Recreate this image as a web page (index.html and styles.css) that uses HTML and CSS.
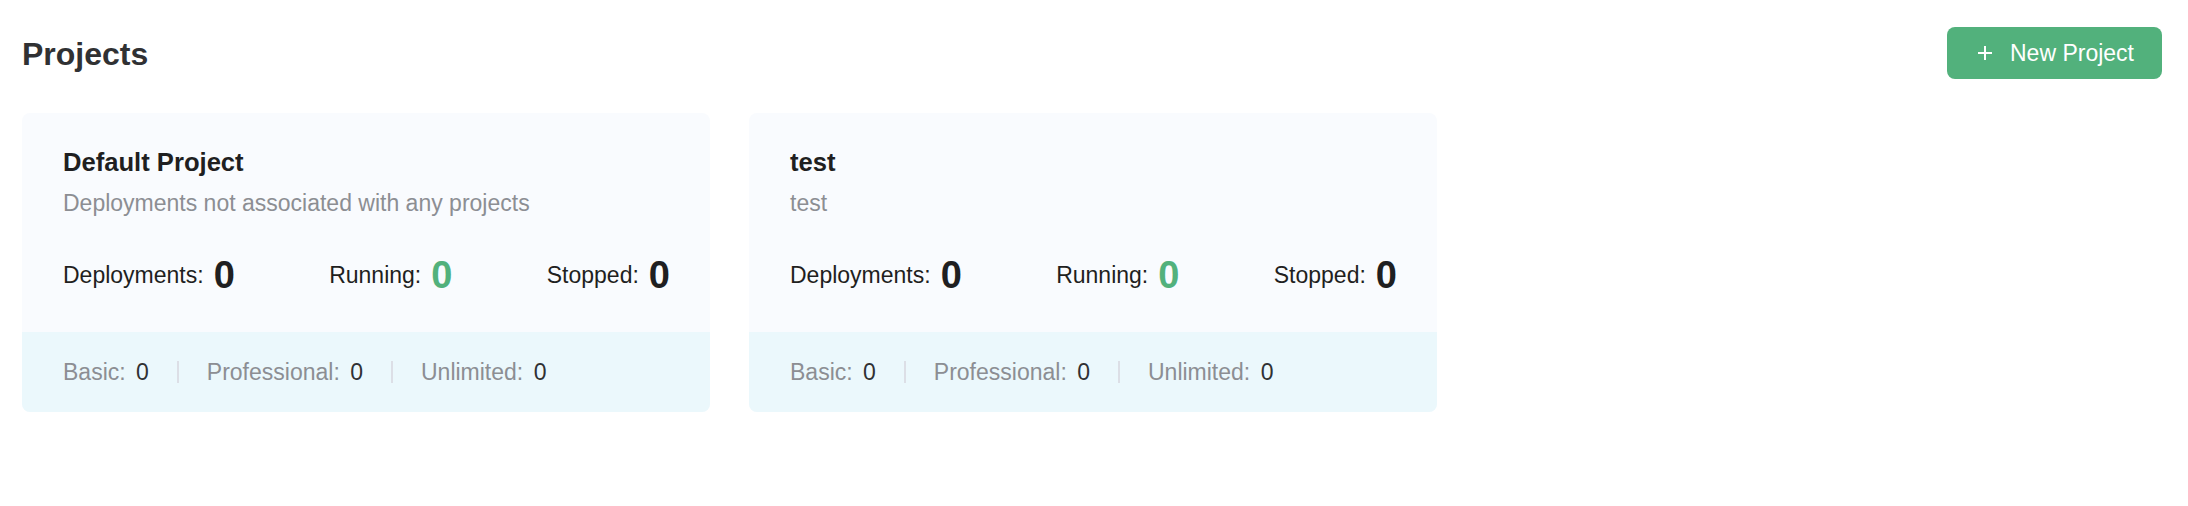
FILE: index.html
```html
<!DOCTYPE html>
<html>
<head>
    <meta charset="utf-8">
    <title>Projects</title>
    <link rel="stylesheet" href="styles.css">
</head>
<body>
    <div class="page">
        <div class="header">
            <h1 class="title">Projects</h1>
            <button class="btn-new">
                <svg class="plus" width="16" height="16" viewBox="0 0 16 16"><path d="M8 1v14M1 8h14" stroke="#fff" stroke-width="2" fill="none"/></svg>
                <span>New Project</span>
            </button>
        </div>
        <div class="cards">
            <div class="card">
                <div class="card-body">
                    <div class="card-name">Default Project</div>
                    <div class="card-desc">Deployments not associated with any projects</div>
                    <div class="stats">
                        <div class="stat"><span class="stat-label">Deployments:</span><span class="stat-num">0</span></div>
                        <div class="stat"><span class="stat-label">Running:</span><span class="stat-num running">0</span></div>
                        <div class="stat"><span class="stat-label">Stopped:</span><span class="stat-num">0</span></div>
                    </div>
                </div>
                <div class="card-foot">
                    <span class="plan">Basic: <b>0</b></span>
                    <span class="sep"></span>
                    <span class="plan">Professional: <b>0</b></span>
                    <span class="sep"></span>
                    <span class="plan">Unlimited: <b>0</b></span>
                </div>
            </div>
            <div class="card">
                <div class="card-body">
                    <div class="card-name">test</div>
                    <div class="card-desc">test</div>
                    <div class="stats">
                        <div class="stat"><span class="stat-label">Deployments:</span><span class="stat-num">0</span></div>
                        <div class="stat"><span class="stat-label">Running:</span><span class="stat-num running">0</span></div>
                        <div class="stat"><span class="stat-label">Stopped:</span><span class="stat-num">0</span></div>
                    </div>
                </div>
                <div class="card-foot">
                    <span class="plan">Basic: <b>0</b></span>
                    <span class="sep"></span>
                    <span class="plan">Professional: <b>0</b></span>
                    <span class="sep"></span>
                    <span class="plan">Unlimited: <b>0</b></span>
                </div>
            </div>
        </div>
    </div>
</body>
</html>
```

FILE: styles.css
```css
body {
    margin: 0;
    background: #fff;
    font-family: "Liberation Sans", Arial, sans-serif;
    color: #303133;
}
.page {
    padding: 27px 26px 0 22px;
}
.header {
    display: flex;
    justify-content: space-between;
    align-items: center;
    height: 52px;
}
.title {
    margin: 0;
    padding-top: 2px;
    font-size: 32px;
    line-height: 44px;
    font-weight: bold;
    color: #303133;
}
.btn-new {
    display: flex;
    align-items: center;
    gap: 17px;
    width: 215px;
    height: 52px;
    padding: 0 0 0 30px;
    border: none;
    border-radius: 8px;
    background: #52b17c;
    color: #fff;
    font-family: inherit;
    font-size: 23px;
}
.plus {
    flex: none;
}
.cards {
    display: flex;
    gap: 39px;
    margin-top: 34px;
}
.card {
    width: 688px;
    border-radius: 8px;
    overflow: hidden;
    background: #f9fbfe;
}
.card-body {
    padding: 33px 40px 35px 41px;
}
.card-name {
    font-size: 25.6px;
    line-height: 32px;
    font-weight: bold;
    color: #1f1f21;
}
.card-desc {
    margin-top: 10px;
    font-size: 23px;
    line-height: 30px;
    color: #8c8e93;
}
.stats {
    display: flex;
    justify-content: space-between;
    align-items: center;
    margin-top: 35px;
}
.stat {
    display: flex;
    align-items: center;
    gap: 10px;
}
.stat-label {
    font-size: 23px;
    line-height: 30px;
    color: #1f1f21;
}
.stat-num {
    font-size: 38px;
    line-height: 44px;
    font-weight: bold;
    color: #1f1f21;
}
.stat-num.running {
    color: #52b17c;
}
.card-foot {
    display: flex;
    align-items: center;
    height: 80px;
    padding: 0 41px;
    background: #ebf8fc;
    font-size: 23px;
    color: #8c8e93;
}
.plan b {
    font-weight: normal;
    color: #303133;
    margin-left: 4px;
}
.sep {
    width: 2px;
    height: 22px;
    margin: 0 28px;
    background: #dcdfe6;
}
```
